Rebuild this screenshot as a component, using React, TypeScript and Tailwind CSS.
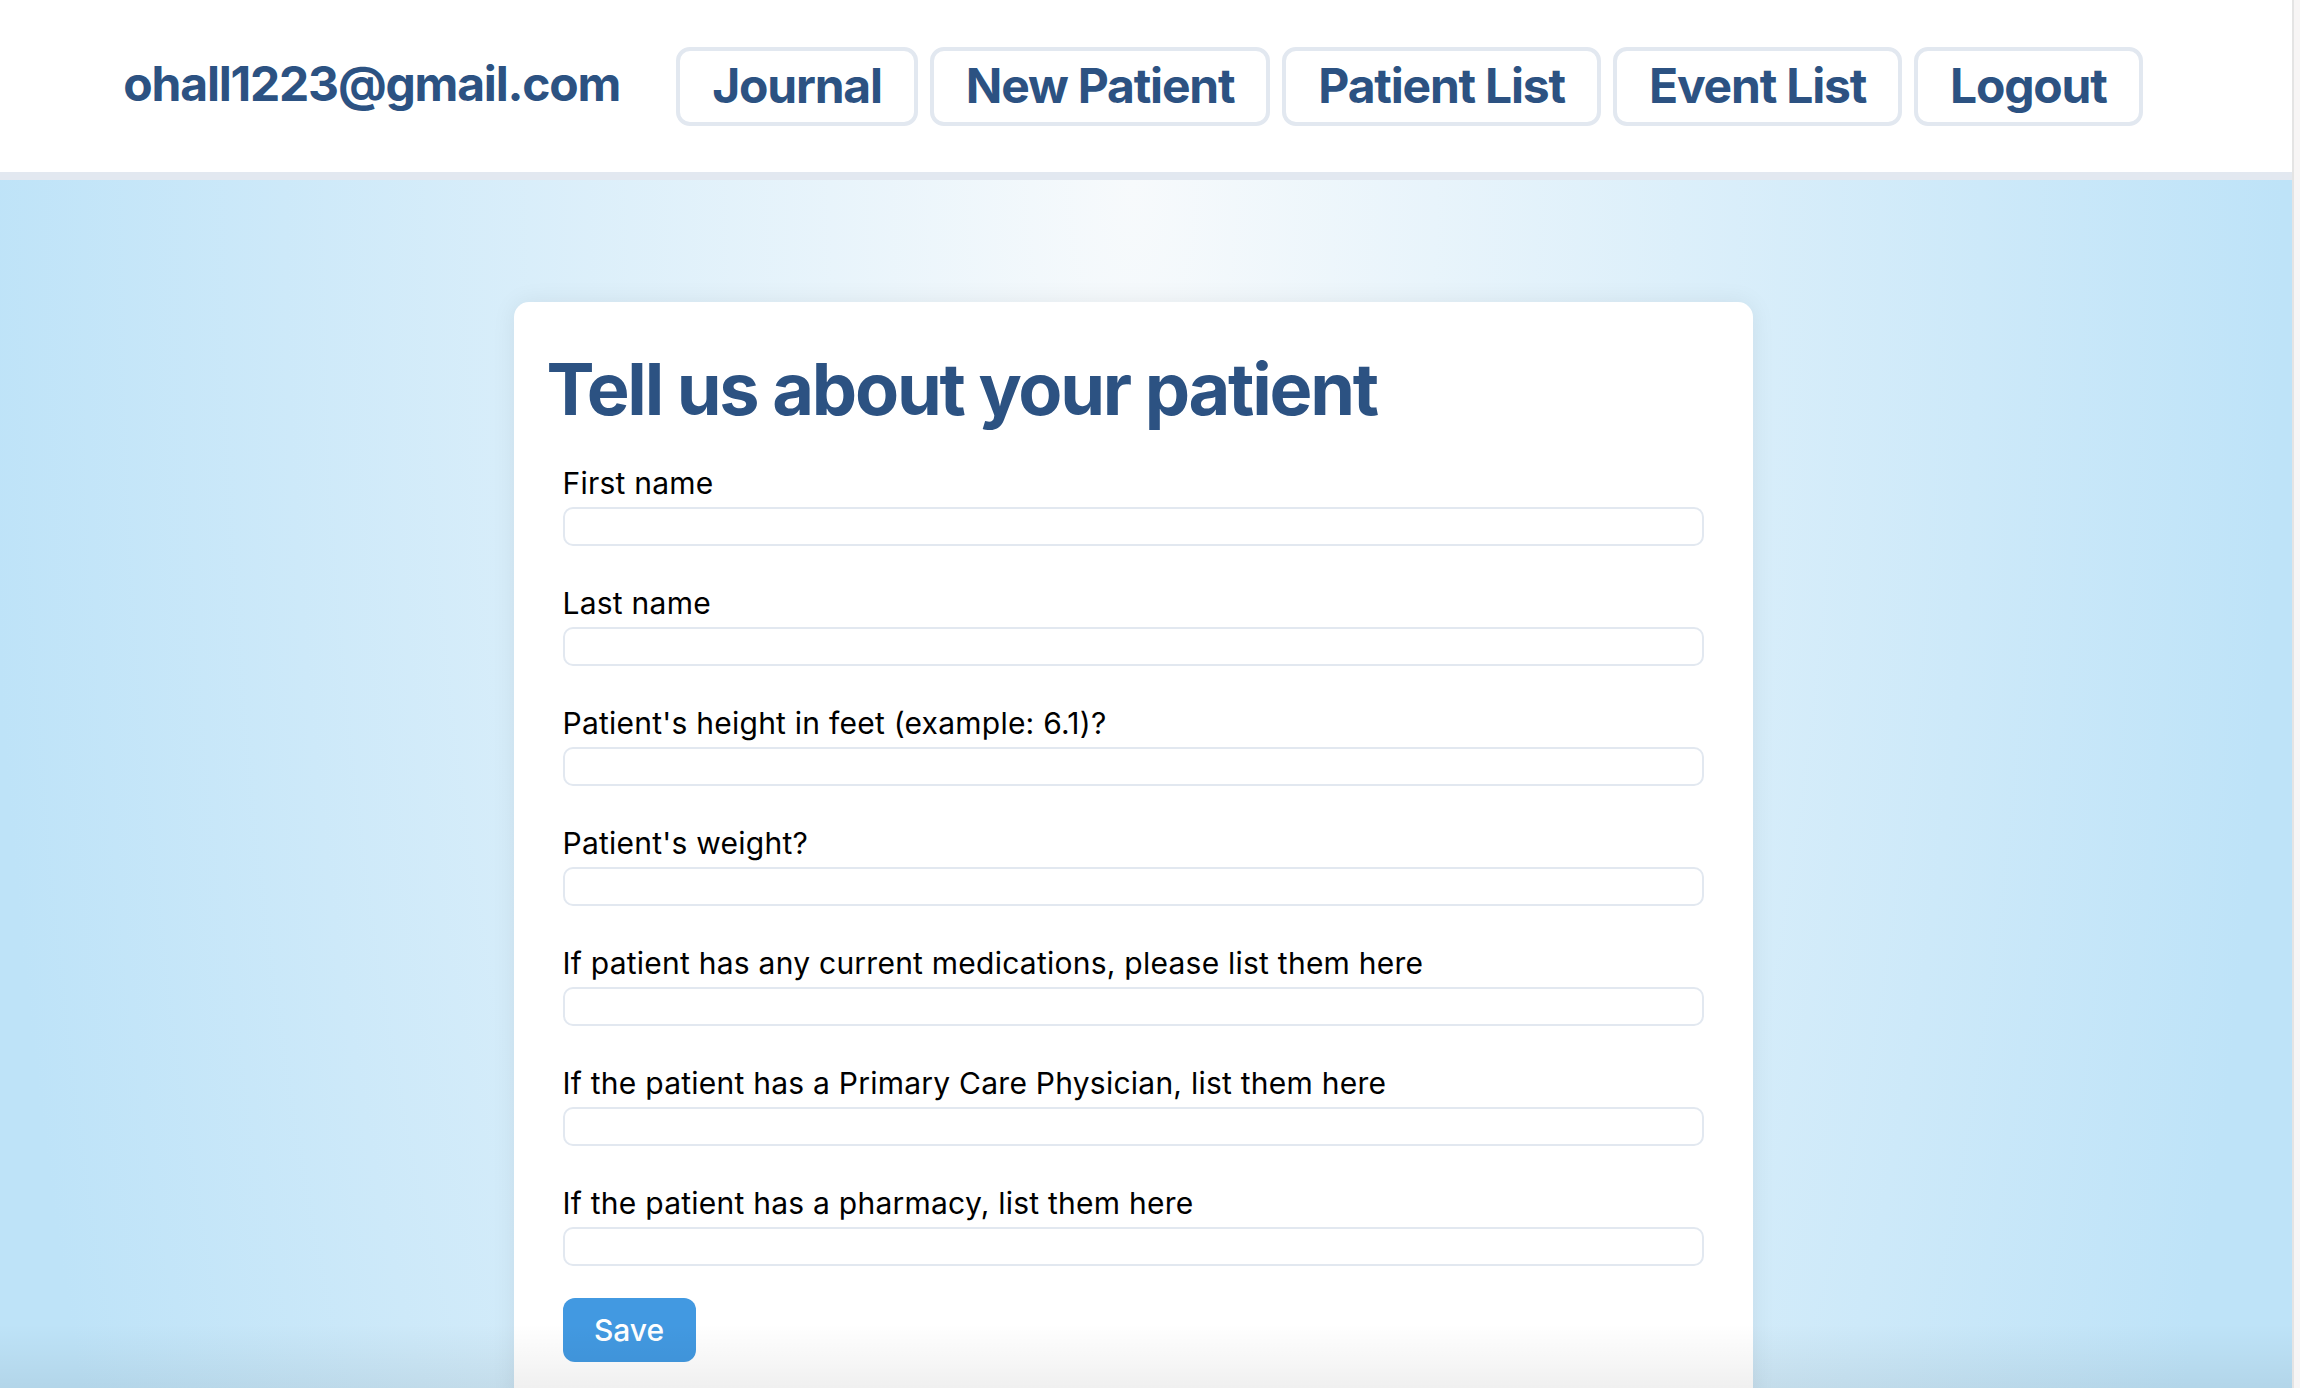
import React from 'react';

const NAV = ['Journal', 'New Patient', 'Patient List', 'Event List', 'Logout'];

const FIELDS = [
  'First name',
  'Last name',
  "Patient's height in feet (example: 6.1)?",
  "Patient's weight?",
  'If patient has any current medications, please list them here',
  'If the patient has a Primary Care Physician, list them here',
  'If the patient has a pharmacy, list them here',
];

function Header() {
  return (
    <header className="flex h-[180px] shrink-0 items-center justify-center gap-[56px] border-b-[8px] border-[#e2e8f0] bg-white pr-[26px]">
      <span className="-mt-[4px] text-[48px] font-bold leading-none tracking-[-0.025em] text-[#2c5282]">
        ohall1223@gmail.com
      </span>
      <nav className="flex items-center gap-[12px]">
        {NAV.map((item) => (
          <button
            key={item}
            type="button"
            className="h-[79px] rounded-[14px] border-[4px] border-[#e2e8f0] bg-white px-[32px] text-[48px] font-bold leading-none tracking-[-0.025em] text-[#2c5282]"
          >
            {item}
          </button>
        ))}
      </nav>
    </header>
  );
}

function Field({ label }: { label: string }) {
  return (
    <div className="flex flex-col gap-[3px]">
      <label className="text-[30px] leading-[42px] tracking-[0.008em] text-black">{label}</label>
      <input
        type="text"
        className="h-[39px] w-full rounded-[10px] border-2 border-[#e2e8f0] bg-white px-3 outline-none"
      />
    </div>
  );
}

function PatientForm() {
  return (
    <div className="w-[1239px] rounded-t-[15px] bg-white px-[33px] pt-[44px] pb-[40px] shadow-[0_0_24px_rgba(0,0,0,0.07)]">
      <h1 className="text-[72px] font-bold leading-[1.2] tracking-[-0.031em] text-[#2c5282]">
        Tell us about your patient
      </h1>
      <form className="mt-[30px] flex flex-col gap-[36px] px-[16px]">
        {FIELDS.map((f) => (
          <Field key={f} label={f} />
        ))}
        <div className="-mt-[4px]">
          <button
            type="button"
            className="h-[64px] w-[133px] rounded-[12px] bg-[#4299e1] text-[30px] font-medium text-white"
          >
            Save
          </button>
        </div>
      </form>
    </div>
  );
}

export default function App() {
  return (
    <div className="relative flex h-screen overflow-hidden font-['Inter',sans-serif]">
      <div className="flex min-w-0 flex-1 flex-col">
        <Header />
        <main className="flex flex-1 justify-center bg-[radial-gradient(ellipse_1150px_3000px_at_1133px_0px,#f7fafc_0%,#bee3f8_100%)] pt-[122px] pr-[26px]">
          <PatientForm />
        </main>
      </div>
      <div className="w-[8px] border-l-2 border-[#e4e4e4] bg-[#f7f5f5]" />
      <div className="pointer-events-none absolute right-[8px] bottom-0 left-0 h-[64px] bg-gradient-to-t from-black/[0.06] to-transparent" />
    </div>
  );
}
